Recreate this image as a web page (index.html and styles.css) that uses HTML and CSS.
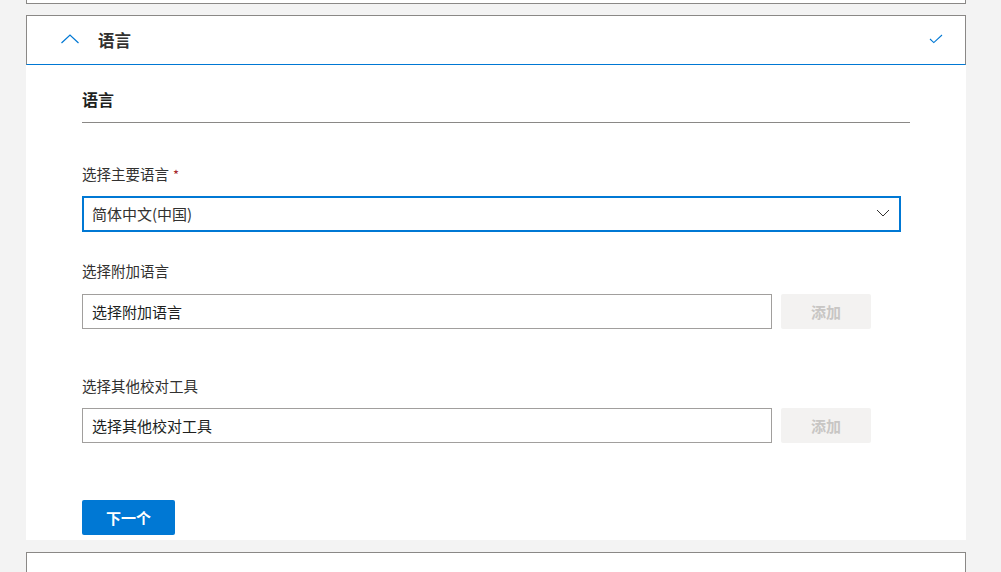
FILE: index.html
```html
<!DOCTYPE html>
<html lang="zh-CN">
<head>
<meta charset="utf-8">
<title>语言</title>
<link rel="stylesheet" href="styles.css">
</head>
<body>
<div class="page">
  <div class="card-prev"></div>
  <div class="section-header">
    <svg class="chev-up" width="20" height="12" viewBox="0 0 20 12"><path d="M1.5 10 L10 2 L18.5 10" fill="none" stroke="#0078d4" stroke-width="1.2"/></svg>
    <span class="section-title">语言</span>
    <svg class="check" width="14" height="10" viewBox="0 0 14 10"><path d="M1 5 L4.8 8.6 L13 1" fill="none" stroke="#0078d4" stroke-width="1.1"/></svg>
  </div>
  <div class="panel">
    <h2 class="panel-heading">语言</h2>

    <label class="field-label label-first">选择主要语言<span class="req">*</span></label>
    <div class="dropdown">
      <span class="dropdown-text">简体中文(中国)</span>
      <svg class="chev-down" width="14" height="8" viewBox="0 0 14 8"><path d="M1 1 L7 7 L13 1" fill="none" stroke="#323130" stroke-width="1"/></svg>
    </div>

    <label class="field-label label-second">选择附加语言</label>
    <div class="row">
      <div class="textfield">选择附加语言</div>
      <button class="btn-add" disabled>添加</button>
    </div>

    <label class="field-label label-third">选择其他校对工具</label>
    <div class="row">
      <div class="textfield">选择其他校对工具</div>
      <button class="btn-add" disabled>添加</button>
    </div>

    <button class="btn-next">下一个</button>
  </div>
  <div class="card-next"></div>
</div>
</body>
</html>
```

FILE: styles.css
```css
* { box-sizing: border-box; }
html, body {
  margin: 0;
  padding: 0;
  background: #f3f3f3;
  height: 100%;
  overflow: hidden;
}
body {
  font-family: "Noto Sans CJK SC", "Noto Sans", sans-serif;
  color: #323130;
}
.page {
  width: 940px;
  margin-left: 26px;
}
.card-prev {
  height: 4px;
  background: #fff;
  border: 1px solid #8a8886;
  border-top: none;
}
.section-header {
  margin-top: 11px;
  height: 50px;
  background: #fff;
  border: 1px solid #8a8886;
  border-bottom: 1px solid #0078d4;
  display: flex;
  align-items: center;
  padding-left: 33px;
  padding-right: 22px;
}
.chev-up { margin-top: -3px; }
.section-title {
  margin-left: 18px;
  font-size: 16.5px;
  font-weight: 700;
  line-height: 20px;
  color: #323130;
  flex: 1;
}
.check { margin-top: -3px; }
.panel {
  background: #fff;
  padding: 23px 56px 5px 56px;
  display: flex;
  flex-direction: column;
  align-items: flex-start;
}
.panel-heading {
  margin: 0;
  align-self: stretch;
  font-size: 16px;
  font-weight: 700;
  line-height: 22px;
  color: #201f1e;
  padding-bottom: 12px;
  border-bottom: 1px solid #8a8886;
}
.field-label {
  display: block;
  font-size: 14.5px;
  line-height: 20px;
  color: #323130;
}
.label-first { margin-top: 41px; margin-bottom: 11px; }
.label-second { margin-top: 29px; margin-bottom: 13px; }
.label-third { margin-top: 47px; margin-bottom: 12px; }
.req {
  color: #a4262c;
  margin-left: 4px;
  font-size: 13px;
}
.dropdown {
  width: 819px;
  height: 36px;
  border: 2px solid #0078d4;
  display: flex;
  align-items: center;
  padding: 0 9px 0 8px;
}
.dropdown-text {
  flex: 1;
  font-size: 15px;
  line-height: 20px;
  color: #323130;
}
.chev-down { margin-top: -2px; }
.row {
  display: flex;
  gap: 9px;
}
.textfield {
  width: 690px;
  height: 35px;
  border: 1px solid #a19f9d;
  padding: 0 9px;
  font-size: 15px;
  line-height: 33px;
  color: #201f1e;
}
.btn-add {
  width: 90px;
  height: 35px;
  border: none;
  border-radius: 2px;
  background: #f3f2f1;
  color: #c8c6c4;
  font-family: inherit;
  font-size: 15px;
  font-weight: 700;
  padding: 0;
}
.btn-next {
  margin-top: 57px;
  width: 93px;
  height: 35px;
  border: none;
  border-radius: 2px;
  background: #0078d4;
  color: #fff;
  font-family: inherit;
  font-size: 15px;
  font-weight: 700;
  padding: 0;
}
.card-next {
  margin-top: 12px;
  height: 40px;
  background: #fff;
  border: 1px solid #8a8886;
  border-bottom: none;
}
```
